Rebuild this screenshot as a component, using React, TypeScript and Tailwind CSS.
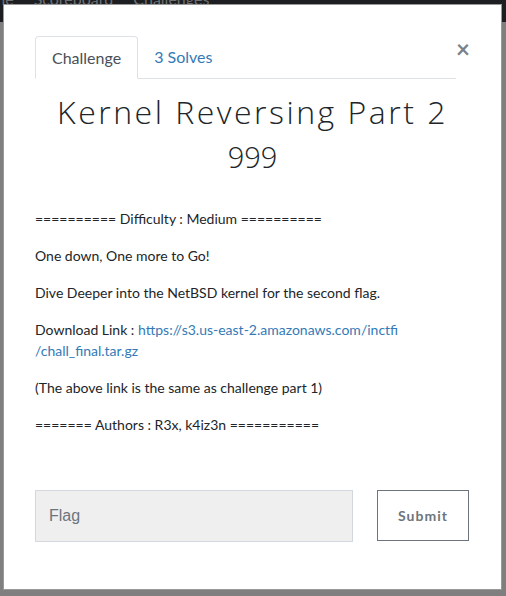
export default function App() {
  return (
    <div className="relative h-[596px] w-full overflow-hidden bg-[#7f7f7f] font-['Lato',sans-serif]">
      <nav className="h-[31px] bg-[#1c1e21]">
        <div className="-ml-[29px] -mt-[9px] flex gap-[20px] text-[16px] leading-[16px] text-[#6d7073]">
          <span>Home</span>
          <span>Scoreboard</span>
          <span>Challenges</span>
        </div>
      </nav>

      <div className="absolute left-[3px] top-[4px] flex h-[586px] w-[499px] flex-col border border-black/40 bg-white px-[31px] pt-[31px]">
        <div className="flex items-start">
          <div className="flex flex-1 border-b border-[#dee2e6]">
            <div className="-mb-px rounded-t-[4px] border border-[#dee2e6] border-b-white bg-white px-4 pb-2 pt-[9px] text-[16px] leading-6 text-[#495057]">
              Challenge
            </div>
            <div className="px-4 pb-2 pt-[9px] text-[16px] leading-6 text-[#337ab7]">3 Solves</div>
          </div>
          <button className="mr-[1px] mt-[1px] w-[13px] text-[24px] font-bold leading-none text-[#6c757d] opacity-90">
            ×
          </button>
        </div>

        <h3 className="mt-[13px] text-center font-['Open_Sans',sans-serif] text-[32px] font-light leading-[40px] tracking-[2.5px] text-[#212529]">
          Kernel Reversing Part 2
        </h3>
        <div className="mt-[5px] text-center font-['Open_Sans',sans-serif] text-[29px] font-light leading-[40px] text-[#212529]">
          999
        </div>

        <div className="mt-[31px] text-[14px] leading-[21px] text-[#212529]">
          <p className="mb-4">========== Difficulty : Medium ==========</p>
          <p className="mb-4">One down, One more to Go!</p>
          <p className="mb-4">Dive Deeper into the NetBSD kernel for the second flag.</p>
          <p className="mb-4">
            Download Link :{" "}
            <a className="text-[#337ab7]" href="#">
              https://s3.us-east-2.amazonaws.com/inctfi
              <br />
              /chall_final.tar.gz
            </a>
          </p>
          <p className="mb-4">(The above link is the same as challenge part 1)</p>
          <p className="mb-4">======= Authors : R3x, k4iz3n ===========</p>
        </div>

        <div className="mt-[39px] flex">
          <input
            className="h-[52px] w-[318px] border border-[#d3d8de] bg-[#efefef] px-[13px] font-['Liberation_Sans',sans-serif] text-[16px] text-[#495057] placeholder:text-[#6c757d] outline-none"
            placeholder="Flag"
          />
          <button className="ml-[24px] h-[51px] w-[92px] border border-[#6c757d] bg-white text-[14px] font-bold tracking-[1px] text-[#6c757d]">
            Submit
          </button>
        </div>
      </div>
    </div>
  );
}
